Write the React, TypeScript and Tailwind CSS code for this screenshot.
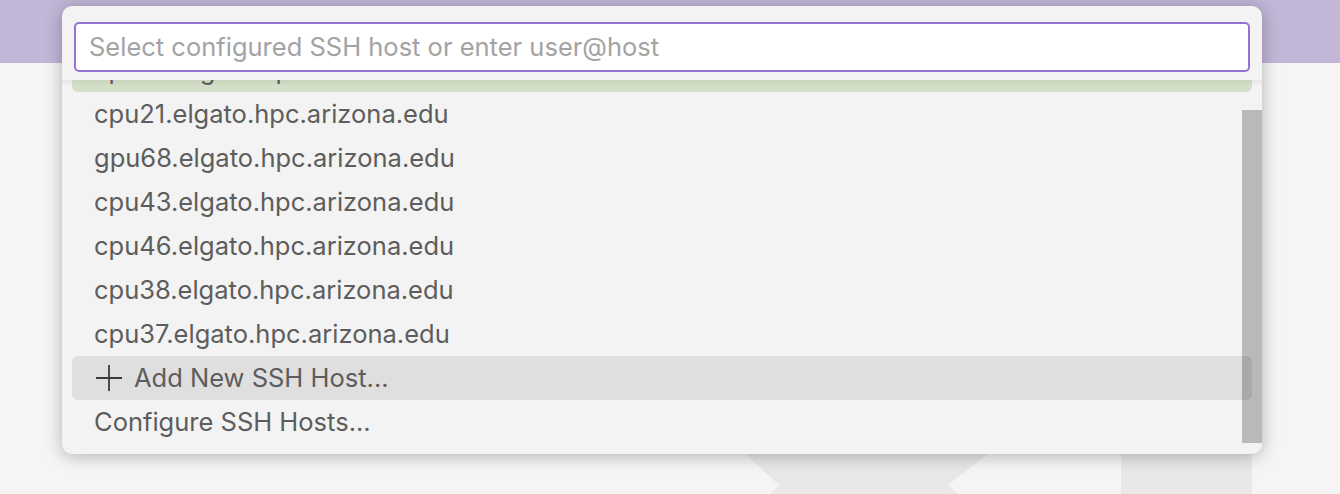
const hosts = [
  'cpu21.elgato.hpc.arizona.edu',
  'gpu68.elgato.hpc.arizona.edu',
  'cpu43.elgato.hpc.arizona.edu',
  'cpu46.elgato.hpc.arizona.edu',
  'cpu38.elgato.hpc.arizona.edu',
  'cpu37.elgato.hpc.arizona.edu',
];

function Watermark() {
  return (
    <svg className="absolute inset-0" width="1340" height="494" viewBox="0 0 1340 494">
      <polygon points="730,440 1006,440 948,485 958,494 770,494 779,485" fill="#e8e8e8" />
      <rect x="1121" y="440" width="131" height="54" fill="#e8e8e8" />
    </svg>
  );
}

function PlusIcon() {
  return (
    <svg width="26" height="26" viewBox="0 0 26 26" className="mr-[12px] shrink-0">
      <path d="M13 0V26M0 13H26" stroke="#3c3c3c" strokeWidth="1.8" fill="none" />
    </svg>
  );
}

function Row({ children, className = '' }: { children: React.ReactNode; className?: string }) {
  return (
    <div className={`flex h-11 items-center rounded-[6px] text-[25.5px] text-[#5d5d5d] ${className}`}>
      {children}
    </div>
  );
}

export default function App() {
  return (
    <div
      className="relative h-[494px] w-[1340px] overflow-hidden bg-[#f5f5f5]"
      style={{ fontFamily: 'Inter, "Noto Sans", sans-serif' }}
    >
      <div className="h-[63px] bg-[#c2b7d7]" />
      <Watermark />

      <div className="absolute left-[62px] top-[6px] flex h-[448px] w-[1200px] flex-col rounded-[10px] bg-[#f3f3f3] shadow-[0_2px_18px_rgba(0,0,0,0.28)]">
        <div className="px-3 pt-4">
          <div className="flex h-[50px] items-center rounded-[5px] border-2 border-[#9473d1] bg-white px-[13px] text-[25.5px] text-[#a3a3a3]">
            Select configured SSH host or enter user@host
          </div>
        </div>

        <div className="relative mt-2 h-[364px] overflow-hidden">
          <div className="-mt-8 px-[10px]">
            <Row className="bg-[#d3dfc6] pl-[22px]">cpu44.elgato.hpc.arizona.edu</Row>
            {hosts.map((h) => (
              <Row key={h} className="pl-[22px]">
                {h}
              </Row>
            ))}
            <Row className="bg-[#dfdfdf] pl-[24px]">
              <PlusIcon />
              Add New SSH Host...
            </Row>
            <Row className="pl-[22px]">Configure SSH Hosts...</Row>
          </div>
          <div className="absolute right-0 top-[30px] h-[333px] w-5 bg-black/[0.24]" />
          <div className="absolute inset-x-0 top-0 h-[6px] bg-gradient-to-b from-black/[0.05] to-transparent" />
        </div>
      </div>
    </div>
  );
}
